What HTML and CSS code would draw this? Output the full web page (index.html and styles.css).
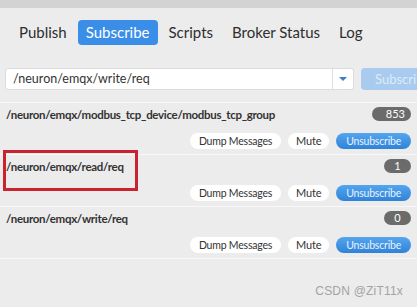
FILE: index.html
```html
<!DOCTYPE html>
<html>
<head>
	<meta charset="utf-8">
	<meta name="viewport" content="width=device-width, initial-scale=1">
	<title>MQTT Client</title>
	<link rel="stylesheet" href="styles.css">
</head>
<body>

<div class="topbar"></div>

<div class="tabs">
	<span class="tab">Publish</span>
	<span class="tab active">Subscribe</span>
	<span class="tab">Scripts</span>
	<span class="tab">Broker Status</span>
	<span class="tab">Log</span>
</div>

<div class="sub-bar">
	<div class="topic-input">
		<span class="topic-value">/neuron/emqx/write/req</span>
		<span class="drop"><span class="arrow"></span></span>
	</div>
	<button class="sub-btn">Subscribe</button>
</div>

<div class="list">
	<div class="row">
		<div class="row-head">
			<span class="topic">/neuron/emqx/modbus_tcp_device/modbus_tcp_group</span>
			<span class="badge wide">853</span>
		</div>
		<div class="row-actions">
			<button class="pill">Dump Messages</button>
			<button class="pill mute">Mute</button>
			<button class="pill blue">Unsubscribe</button>
		</div>
	</div>
	<div class="row">
		<div class="row-head">
			<span class="topic">/neuron/emqx/read/req</span>
			<span class="badge">1</span>
		</div>
		<div class="row-actions">
			<button class="pill">Dump Messages</button>
			<button class="pill mute">Mute</button>
			<button class="pill blue">Unsubscribe</button>
		</div>
	</div>
	<div class="row">
		<div class="row-head">
			<span class="topic">/neuron/emqx/write/req</span>
			<span class="badge">0</span>
		</div>
		<div class="row-actions">
			<button class="pill">Dump Messages</button>
			<button class="pill mute">Mute</button>
			<button class="pill blue">Unsubscribe</button>
		</div>
	</div>
</div>

<!-- annotation + watermark drawn over the screenshot -->
<div class="mark"></div>
<div class="watermark">CSDN @ZiT11x</div>

</body>
</html>
```

FILE: styles.css
```css
body {
	margin: 0;
	padding: 0;
	width: 417px;
	height: 307px;
	overflow: hidden;
	position: relative;
	background-color: #ececec;
	font-family: Lato, "Open Sans", sans-serif;
	color: #333;
}
.topbar {
	height: 8px;
	background-color: #d3d3d3;
}
.tabs {
	display: flex;
	gap: 3px;
	margin-top: 12px;
	padding-left: 11px;
}
.tab {
	height: 25px;
	line-height: 25px;
	padding: 0 8px;
	font-size: 15px;
	border-radius: 4px;
	color: #2e2e2e;
	white-space: nowrap;
}
.tab.active {
	background-color: #3b8ee8;
	color: #fff;
}
.sub-bar {
	display: flex;
	gap: 7px;
	margin-top: 23px;
	padding-left: 5px;
}
.topic-input {
	display: flex;
	flex-shrink: 0;
	width: 347px;
	height: 20px;
	background-color: #fff;
	border: 1px solid #dcdcdc;
	border-radius: 3px;
}
.topic-value {
	flex: 1;
	padding-left: 7px;
	font-size: 12.5px;
	line-height: 20px;
}
.drop {
	width: 20px;
	border-left: 1px solid #dedede;
	display: flex;
	align-items: center;
	justify-content: center;
}
.arrow {
	width: 0;
	height: 0;
	border-left: 4px solid transparent;
	border-right: 4px solid transparent;
	border-top: 4px solid #3f7fc0;
}
.sub-btn {
	width: 80px;
	height: 22px;
	flex-shrink: 0;
	padding: 0 0 0 14px;
	text-align: left;
	border: none;
	border-radius: 4px;
	background-color: #a8cbef;
	color: #dcebfa;
	font-family: Lato, sans-serif;
	font-size: 13px;
}
.list {
	margin-top: 12px;
	border-top: 1px solid #f8f8f8;
}
.row {
	padding: 4px 6px 5px 5px;
	border-bottom: 1px solid #f8f8f8;
}
.row-head {
	display: flex;
	justify-content: space-between;
	align-items: center;
	height: 14px;
}
.topic {
	font-size: 11.5px;
	font-weight: bold;
	letter-spacing: -0.3px;
	color: #333;
	padding-left: 1px;
}
.badge {
	min-width: 27px;
	height: 14px;
	line-height: 14px;
	border-radius: 7px;
	background-color: #6b6b6b;
	color: #fff;
	font-size: 11px;
	text-align: center;
	box-sizing: border-box;
}
.badge.wide {
	width: 39px;
	text-align: right;
	padding-right: 6px;
}
.row-actions {
	display: flex;
	justify-content: flex-end;
	gap: 7px;
	margin-top: 12px;
}
.pill {
	height: 16px;
	padding: 0 9px;
	border: none;
	border-radius: 8px;
	background-color: #fff;
	color: #333;
	font-family: Lato, sans-serif;
	font-size: 10.5px;
	letter-spacing: -0.2px;
	line-height: 16px;
}
.pill.mute {
	width: 41px;
	padding: 0;
	font-size: 11px;
}
.pill.blue {
	background: linear-gradient(#55a5ee, #2f83d8);
	color: #e8f2fc;
	padding: 0 10px;
}
.mark {
	position: absolute;
	left: 3px;
	top: 150px;
	width: 129px;
	height: 35px;
	border: 3px solid #c9232f;
}
.watermark {
	position: absolute;
	right: 14px;
	bottom: 9px;
	font-family: "Liberation Sans", Arial, sans-serif;
	font-size: 12px;
	color: #a3a3a3;
	letter-spacing: 0.2px;
}
```
